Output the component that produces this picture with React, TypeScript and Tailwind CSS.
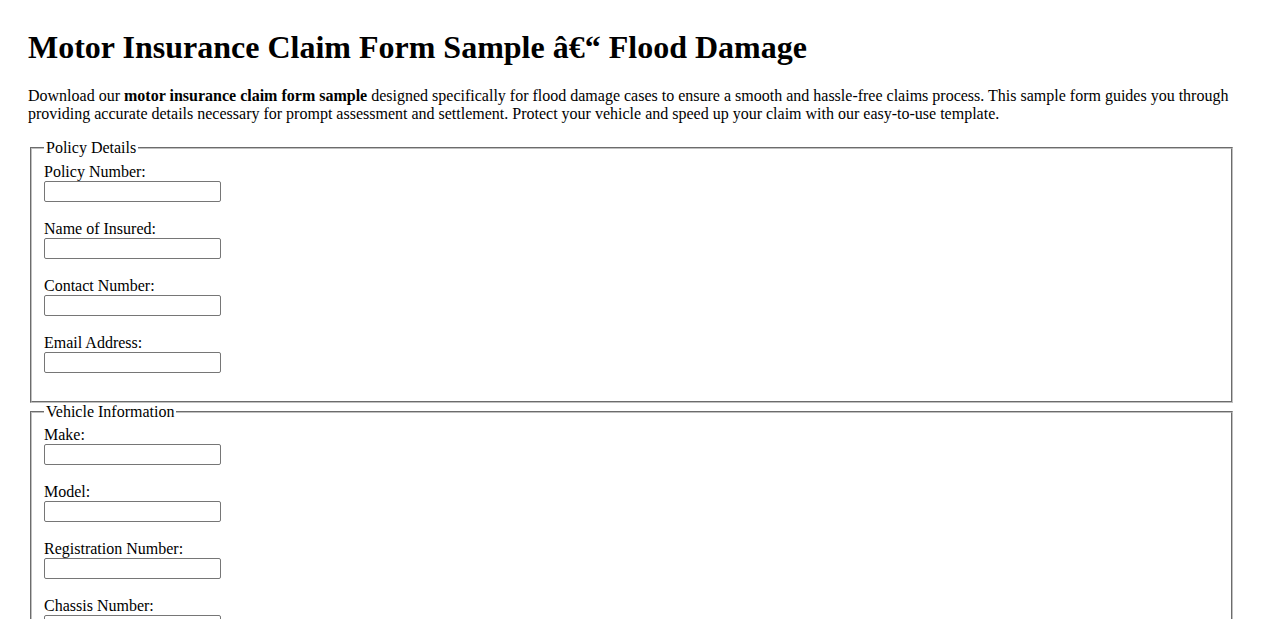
import React from "react";

const policy = ["Policy Number:", "Name of Insured:", "Contact Number:", "Email Address:"];
const vehicle = [
  "Make:",
  "Model:",
  "Registration Number:",
  "Chassis Number:",
  "Engine Number:",
  "Year of Manufacture:",
];
const incident = ["Date of Flood:", "Location of Incident:", "Description of Damage:"];

function Field({ label }: { label: string }) {
  return (
    <div>
      <label className="block">{label}</label>
      <input
        type="text"
        className="block w-[177px] h-[21px] mb-[18px] border border-[#767676] rounded-[2px] bg-white px-[2px] text-[13.333px] [font-family:Arial,'Liberation_Sans',sans-serif]"
      />
    </div>
  );
}

function Group({ title, fields }: { title: string; fields: string[] }) {
  return (
    <fieldset className="mx-[2px] border-2 [border-style:groove] border-[#c0c0c0] pt-[5.6px] px-[12px] pb-[9.5px] min-w-0">
      <legend className="px-[2px]">{title}</legend>
      {fields.map((f) => (
        <Field key={f} label={f} />
      ))}
    </fieldset>
  );
}

export default function App() {
  return (
    <div className="bg-white text-black px-[28px] pt-[29px] pb-[28px] text-[16px] leading-[normal] [font-family:'Liberation_Serif','Times_New_Roman',serif]">
      <h1 className="text-[32px] font-bold leading-[normal] mb-[21.44px]">
        Motor Insurance Claim Form Sample â€“ Flood Damage
      </h1>
      <p className="mb-[16px]">
        Download our <strong className="font-bold">motor insurance claim form sample</strong> designed specifically for
        flood damage cases to ensure a smooth and hassle-free claims process. This sample form guides you through
        providing accurate details necessary for prompt assessment and settlement. Protect your vehicle and speed up
        your claim with our easy-to-use template.
      </p>
      <form>
        <Group title="Policy Details" fields={policy} />
        <Group title="Vehicle Information" fields={vehicle} />
        <Group title="Incident Details" fields={incident} />
      </form>
    </div>
  );
}
